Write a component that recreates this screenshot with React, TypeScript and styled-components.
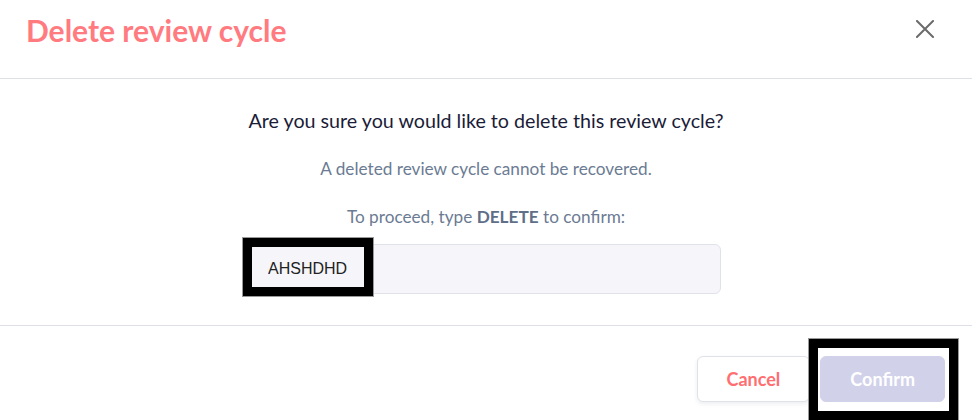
import React from "react";
import styled, { createGlobalStyle } from "styled-components";

const Global = createGlobalStyle`
  html, body { margin: 0; padding: 0; background: #ffffff; }
  body { font-family: Lato, "Open Sans", sans-serif; }
  * { box-sizing: border-box; }
`;

const Modal = styled.div`
  width: 972px;
  height: 420px;
  background: #ffffff;
  display: flex;
  flex-direction: column;
  overflow: hidden;
`;

const Header = styled.header`
  height: 79px;
  border-bottom: 1px solid #dde1e7;
  display: flex;
  align-items: flex-start;
  justify-content: space-between;
  padding: 10px 36px 0 26px;
`;

const Title = styled.h1`
  margin: 0;
  font-family: Lato, sans-serif;
  font-weight: 700;
  font-size: 30px;
  line-height: 40px;
  color: #ff7b7f;
`;

const CloseButton = styled.button`
  border: none;
  background: transparent;
  padding: 0;
  margin-top: 8px;
  width: 22px;
  height: 22px;
  display: flex;
  align-items: center;
  justify-content: center;
  cursor: pointer;
`;

const Body = styled.section`
  flex: 0 0 247px;
  border-bottom: 1px solid #dde1e7;
  display: flex;
  flex-direction: column;
  align-items: center;
  padding-top: 30px;
`;

const Question = styled.p`
  margin: 0;
  font-size: 19.7px;
  line-height: 24px;
  color: #1b1c38;
`;

const Note = styled.p<{ $gap: number }>`
  margin: ${(p) => p.$gap}px 0 0;
  font-size: 17.2px;
  line-height: 24px;
  color: #6b7b93;
  strong { font-weight: 700; color: #5f6f88; }
`;

const InputWrap = styled.div`
  position: relative;
  margin-top: 15px;
  width: 470px;
`;

const Input = styled.input`
  width: 100%;
  height: 50px;
  border: 1px solid #dfe2e8;
  border-radius: 6px;
  background: #f6f6fa;
  padding: 0 16px;
  font-family: "Liberation Sans", Arial, sans-serif;
  font-size: 16px;
  color: #222222;
  outline: none;
`;

const Highlight = styled.div<{ $l: number; $t: number; $w: number; $h: number }>`
  position: absolute;
  left: ${(p) => p.$l}px;
  top: ${(p) => p.$t}px;
  width: ${(p) => p.$w}px;
  height: ${(p) => p.$h}px;
  border: 9px solid #000000;
  box-shadow: 0 0 0 1px #9a9a9a;
  pointer-events: none;
`;

const Footer = styled.footer`
  display: flex;
  justify-content: flex-end;
  gap: 10px;
  padding: 30px 27px 0 0;
`;

const Button = styled.button<{ $primary?: boolean }>`
  position: relative;
  height: 46px;
  padding: 0 ${(p) => (p.$primary ? 29 : 29)}px;
  border-radius: 6px;
  font-family: Lato, sans-serif;
  font-weight: 700;
  font-size: 18px;
  border: 1px solid ${(p) => (p.$primary ? "#d1d1ea" : "#dfe2e8")};
  background: ${(p) => (p.$primary ? "#d1d1ea" : "#ffffff")};
  color: ${(p) => (p.$primary ? "#ffffff" : "#ff6e70")};
  box-shadow: ${(p) => (p.$primary ? "none" : "0 2px 4px rgba(30, 40, 80, 0.08)")};
  cursor: pointer;
`;

export default function App() {
  return (
    <>
      <Global />
      <Modal>
        <Header>
          <Title>Delete review cycle</Title>
          <CloseButton aria-label="Close">
            <svg width="18" height="18" viewBox="0 0 18 18">
              <path d="M1 1 L17 17 M17 1 L1 17" stroke="#6b6b6b" strokeWidth="2" strokeLinecap="square" />
            </svg>
          </CloseButton>
        </Header>
        <Body>
          <Question>Are you sure you would like to delete this review cycle?</Question>
          <Note $gap={24}>A deleted review cycle cannot be recovered.</Note>
          <Note $gap={24}>
            To proceed, type <strong>DELETE</strong> to confirm:
          </Note>
          <InputWrap>
            <Input defaultValue="AHSHDHD" />
            <Highlight $l={-8} $t={-6} $w={130} $h={58} />
          </InputWrap>
        </Body>
        <Footer>
          <Button>Cancel</Button>
          <Button $primary>
            Confirm
            <Highlight $l={-12} $t={-18} $w={149} $h={81} />
          </Button>
        </Footer>
      </Modal>
    </>
  );
}
